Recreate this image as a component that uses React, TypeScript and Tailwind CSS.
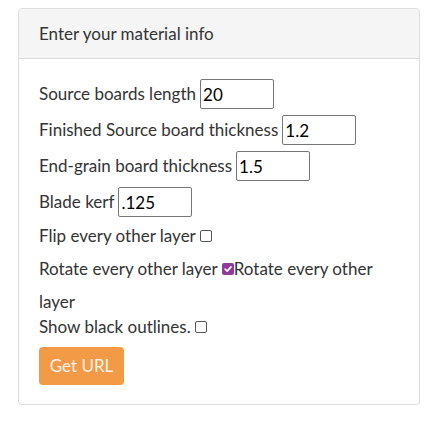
import React from 'react'

function Field({ label, value }: { label: string; value: string }) {
  return (
    <div className="flex items-center h-[30px] mb-[6px]">
      <span>{label}</span>
      <input
        defaultValue={value}
        className="ml-[4px] w-[74px] h-[30px] border border-[#767676] rounded-[2px] px-[2px] text-black outline-none"
      />
    </div>
  )
}

function Box({ checked = false }: { checked?: boolean }) {
  if (checked) {
    return (
      <span className="inline-flex items-center justify-center w-[12px] h-[12px] rounded-[2px] bg-[#8e3b9c] align-middle">
        <svg viewBox="0 0 12 12" className="w-[10px] h-[10px]">
          <path d="M2.5 6.2 L5 8.6 L9.6 3.4" fill="none" stroke="white" strokeWidth="2" strokeLinecap="round" strokeLinejoin="round" />
        </svg>
      </span>
    )
  }
  return <span className="inline-block w-[12px] h-[12px] rounded-[2px] border border-[#555] bg-white align-middle" />
}

export default function App() {
  return (
    <div className="min-h-screen bg-white pt-[8px] pl-[18px] text-[17px] text-[#333]" style={{ fontFamily: 'Lato, "Open Sans", sans-serif' }}>
      <div className="w-[402px] border border-[#ddd] rounded-[4px] overflow-hidden">
        <div className="h-[50px] bg-[#f5f5f5] border-b border-[#ddd] px-[20px] flex items-center">
          Enter your material info
        </div>
        <div className="pt-[20px] pb-[19px] px-[20px]">
          <Field label="Source boards length" value="20" />
          <Field label="Finished Source board thickness" value="1.2" />
          <Field label="End-grain board thickness" value="1.5" />
          <Field label="Blade kerf" value=".125" />
          <div className="flex items-center h-[24px] mt-[7px]">
            <span>Flip every other layer</span>
            <span className="ml-[4px] flex"><Box /></span>
          </div>
          <div className="flex items-center h-[24px] mt-[9px]">
            <span>Rotate every other layer</span>
            <span className="ml-[4px] flex"><Box checked /></span>
            <span>Rotate every other</span>
          </div>
          <div className="h-[24px] leading-[24px] mt-[9px]">layer</div>
          <div className="flex items-center h-[24px] mt-[1px]">
            <span>Show black outlines.</span>
            <span className="ml-[4px] flex"><Box /></span>
          </div>
          <button className="mt-[8px] w-[85px] h-[38px] rounded-[4px] bg-[#f39a47] text-[#fdf3ea] text-[17px]">
            Get URL
          </button>
        </div>
      </div>
    </div>
  )
}
